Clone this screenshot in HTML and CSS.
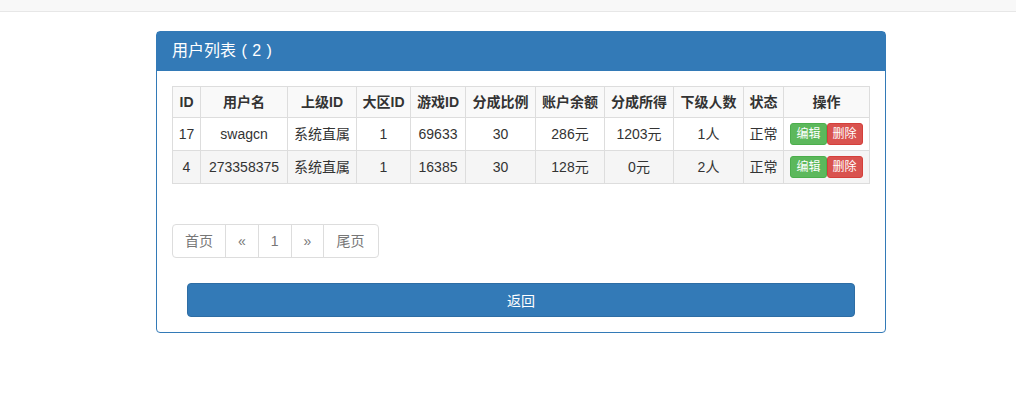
FILE: index.html
```html
<!DOCTYPE html>
<html lang="zh-CN">
<head>
  <meta charset="utf-8" />
  <title>用户列表</title>
  <link rel="stylesheet" href="styles.css">
</head>
<body>
  <div class="topbar"></div>

  <div class="panel">
    <div class="panel-heading">用户列表 ( 2 )</div>
    <div class="panel-body">
      <table class="user-table">
        <colgroup>
          <col style="width: 28px">
          <col style="width: 87px">
          <col style="width: 69px">
          <col style="width: 54px">
          <col style="width: 55px">
          <col style="width: 70px">
          <col style="width: 69px">
          <col style="width: 69px">
          <col style="width: 70px">
          <col style="width: 40px">
          <col>
        </colgroup>
        <tbody>
          <tr class="head">
            <th>ID</th>
            <th>用户名</th>
            <th>上级ID</th>
            <th>大区ID</th>
            <th>游戏ID</th>
            <th>分成比例</th>
            <th>账户余额</th>
            <th>分成所得</th>
            <th>下级人数</th>
            <th>状态</th>
            <th>操作</th>
          </tr>
          <tr>
            <td>17</td>
            <td>swagcn</td>
            <td>系统直属</td>
            <td>1</td>
            <td>69633</td>
            <td>30</td>
            <td>286元</td>
            <td>1203元</td>
            <td>1人</td>
            <td>正常</td>
            <td><a class="btn-xs btn-success">编辑</a><a class="btn-xs btn-danger">删除</a></td>
          </tr>
          <tr>
            <td>4</td>
            <td>273358375</td>
            <td>系统直属</td>
            <td>1</td>
            <td>16385</td>
            <td>30</td>
            <td>128元</td>
            <td>0元</td>
            <td>2人</td>
            <td>正常</td>
            <td><a class="btn-xs btn-success">编辑</a><a class="btn-xs btn-danger">删除</a></td>
          </tr>
        </tbody>
      </table>

      <ul class="pagination">
        <li><a>首页</a></li>
        <li><a>&laquo;</a></li>
        <li><a>1</a></li>
        <li><a>&raquo;</a></li>
        <li><a>尾页</a></li>
      </ul>

      <div class="form-row">
        <button class="btn-back">返回</button>
      </div>
    </div>
  </div>
</body>
</html>
```

FILE: styles.css
```css
/* 基本字體與顏色 */
body {
  margin: 0;
  padding: 0;
  font-family: "Liberation Sans", "Noto Sans CJK SC", sans-serif;
  font-size: 14px;
  line-height: 20px;
  color: #333;
  background: #fff;
}
/* 頂部導航條 */
.topbar {
  height: 11px;
  background: #f8f8f8;
  border-bottom: 1px solid #e7e7e7;
}
/* 面板 */
.panel {
  width: 728px;
  margin: 19px 0 0 156px;
  border: 1px solid #337ab7;
  border-radius: 4px;
}
.panel-heading {
  background: #337ab7;
  color: #fff;
  font-size: 16px;
  line-height: 18px;
  padding: 10px 15px 10px;
  border-bottom: 1px solid #337ab7;
  white-space: pre;
  word-spacing: 1px;
}
.panel-body {
  padding: 15px;
}
/* 表格 */
.user-table {
  width: 100%;
  table-layout: fixed;
  border-collapse: collapse;
  margin-bottom: 20px;
}
.user-table th,
.user-table td {
  border: 1px solid #ddd;
  padding: 5px 0;
  text-align: center;
  vertical-align: middle;
  white-space: nowrap;
}
.user-table td {
  padding: 5px 0 4.5px;
}
.user-table th {
  font-weight: bold;
}
.user-table tr:nth-of-type(odd) {
  background: #f9f9f9;
}
.user-table tr:nth-of-type(3) {
  background: #f5f5f5;
}
/* 小按鈕 */
.btn-xs {
  display: inline-block;
  font-size: 12px;
  line-height: 18px;
  padding: 1px 5px;
  border: 1px solid transparent;
  border-radius: 3px;
  color: #fff;
  vertical-align: middle;
}
.btn-success {
  background: #5cb85c;
  border-color: #4cae4c;
}
.btn-danger {
  background: #d9534f;
  border-color: #d43f3a;
}
/* 分頁 */
.pagination {
  display: inline-flex;
  list-style: none;
  margin: 20px 0;
  padding: 0;
}
.pagination li a {
  display: block;
  padding: 6px 12px;
  line-height: 20px;
  color: #777;
  border: 1px solid #ddd;
  margin-left: -1px;
  background: #fff;
}
.pagination li:first-child a {
  margin-left: 0;
  border-radius: 4px 0 0 4px;
}
.pagination li:last-child a {
  padding-right: 14px;
  border-radius: 0 4px 4px 0;
}
/* 返回按鈕 */
.form-row {
  padding: 5px 15px 0;
}
.btn-back {
  display: block;
  width: 100%;
  height: 34px;
  font-family: inherit;
  font-size: 14px;
  color: #fff;
  background: #337ab7;
  border: 1px solid #2e6da4;
  border-radius: 4px;
}
```
